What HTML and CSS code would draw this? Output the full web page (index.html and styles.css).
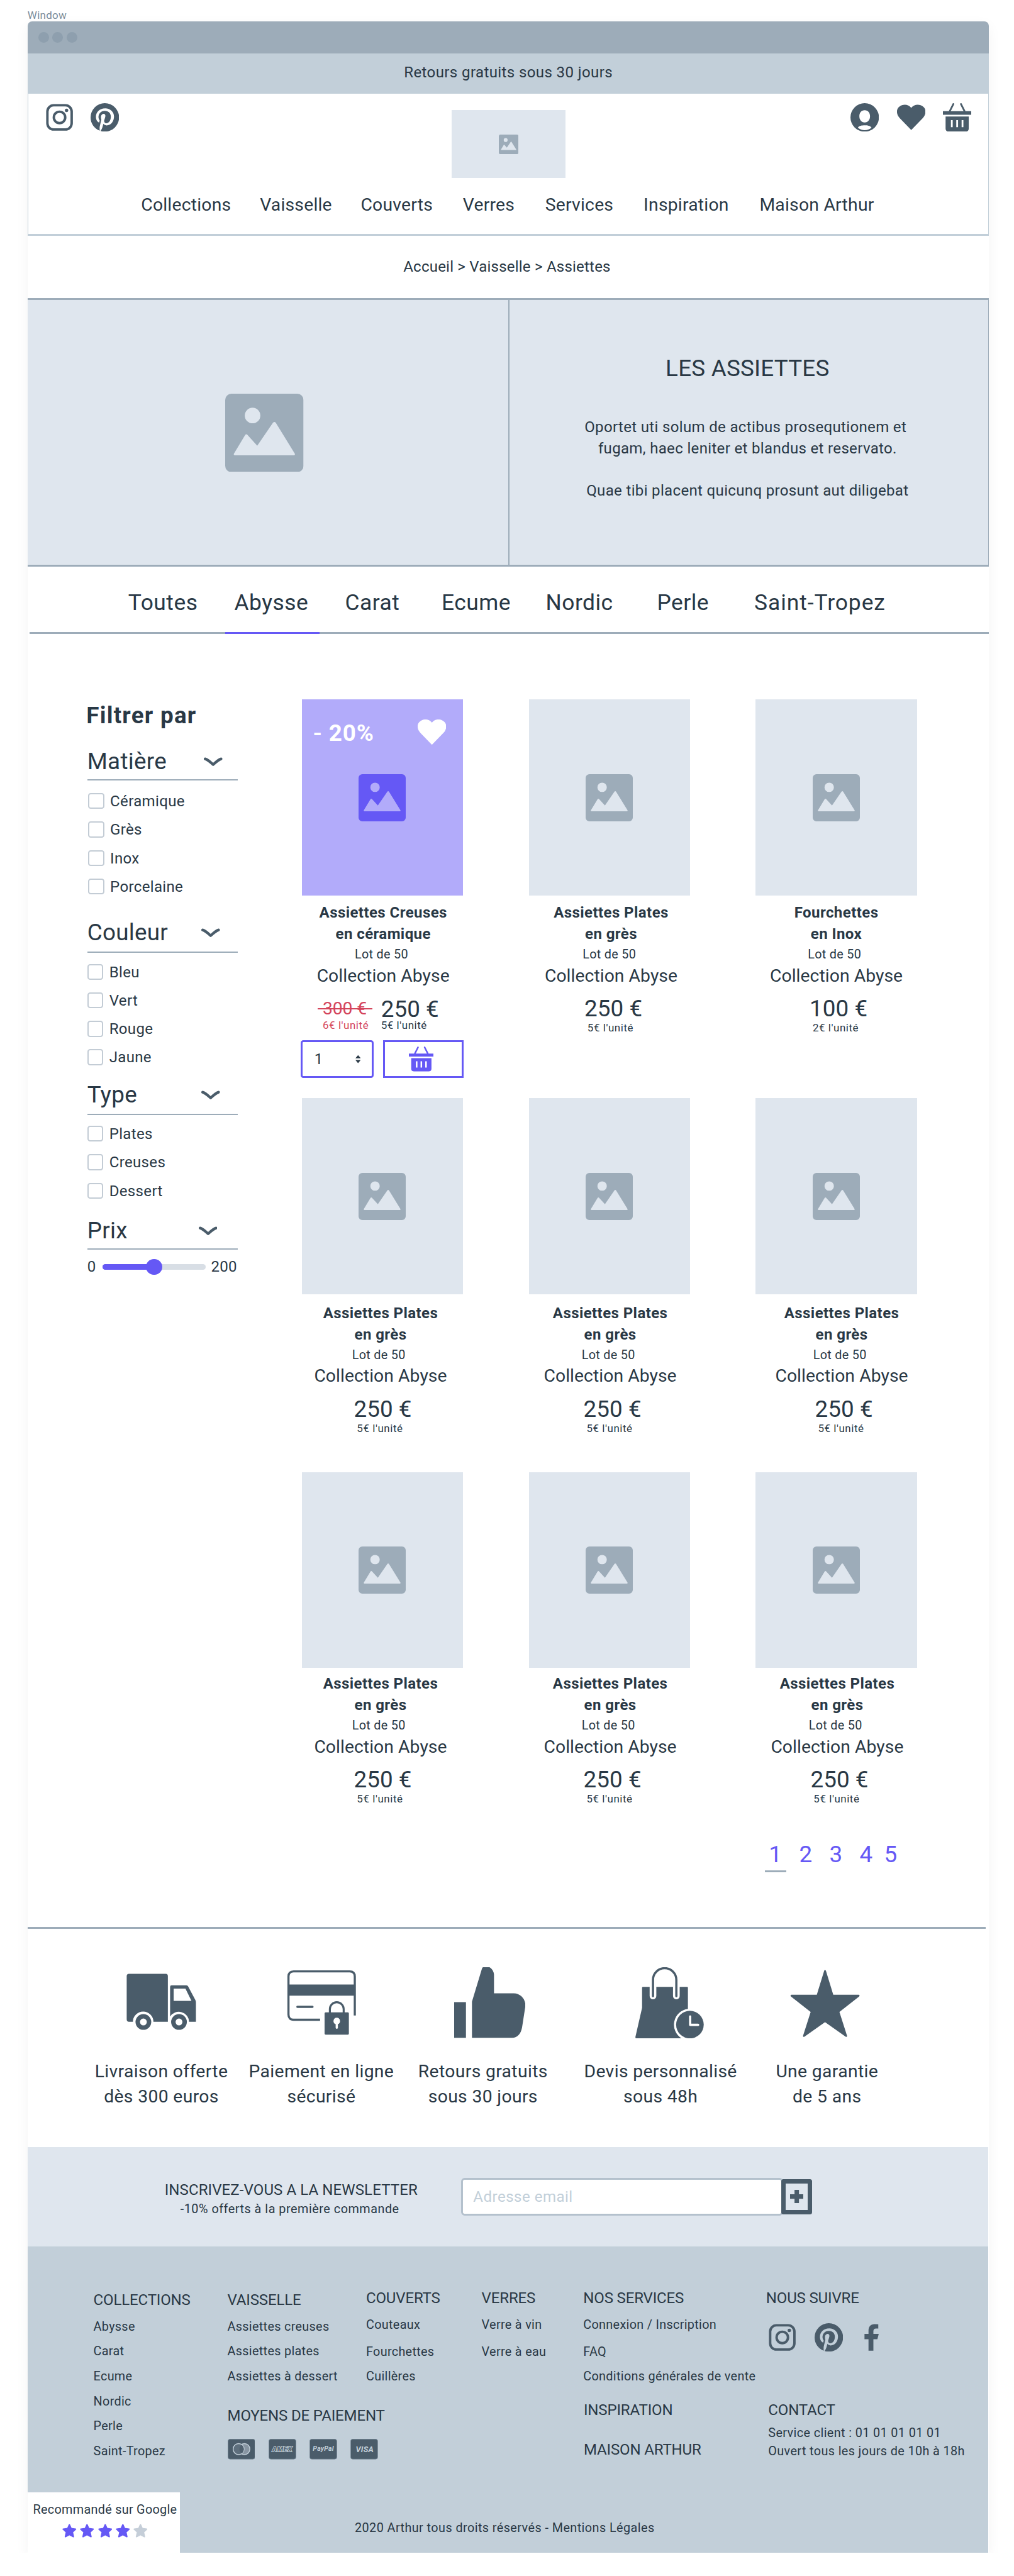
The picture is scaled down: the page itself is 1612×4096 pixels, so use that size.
FILE: index.html
```html
<!DOCTYPE html>
<html lang="fr">
<head>
<meta charset="utf-8">
<title>Les assiettes</title>
<link rel="stylesheet" href="styles.css">
</head>
<body>
<svg class="sprite" aria-hidden="true">
  <symbol id="instagram" viewBox="0 0 64 64"><rect x="4.75" y="4.75" width="54.5" height="54.5" rx="14" fill="none" stroke="currentColor" stroke-width="5.5"/><circle cx="32" cy="32" r="12.8" fill="none" stroke="currentColor" stroke-width="5.5"/><circle cx="47.8" cy="16.2" r="3.8" fill="currentColor"/></symbol>
  <symbol id="pinterest" viewBox="2 2 20 20"><path fill="currentColor" d="M9.04 21.54c.96.29 1.93.46 2.96.46a10 10 0 0 0 10-10A10 10 0 0 0 12 2 10 10 0 0 0 2 12c0 4.25 2.67 7.9 6.44 9.34-.09-.78-.18-2.07 0-2.96l1.15-4.94s-.29-.58-.29-1.5c0-1.38.86-2.41 1.84-2.41.86 0 1.26.63 1.26 1.44 0 .86-.57 2.09-.86 3.27-.17.98.52 1.84 1.52 1.84 1.78 0 3.16-1.9 3.16-4.58 0-2.4-1.72-4.04-4.19-4.04-2.82 0-4.48 2.1-4.48 4.31 0 .86.28 1.73.74 2.3.09.06.09.14.06.29l-.29 1.09c0 .17-.11.23-.28.11-1.28-.56-2.02-2.38-2.02-3.85 0-3.16 2.24-6.03 6.56-6.03 3.44 0 6.12 2.47 6.12 5.75 0 3.44-2.13 6.2-5.18 6.2-.97 0-1.92-.52-2.26-1.13l-.67 2.37c-.23.86-.86 2.01-1.29 2.7z"/></symbol>
  <symbol id="facebook" viewBox="0 0 64 64"><path fill="currentColor" d="M25 62V36H16V24H25V17C25 7 30 2 39 2Q44 2 47 2.500V12H42C38 12 36 14 36 18V24H48L45 36H36V62Z"/></symbol>
  <symbol id="user" viewBox="0 0 64 64"><path fill="currentColor" fill-rule="evenodd" d="M32 0A32 32 0 1 1 32 64A32 32 0 1 1 32 0ZM32 16C24.500 16 20 21.500 20 29.500S24.500 43.500 32 43.500 44 37.500 44 29.500 39.500 16 32 16ZM16.700 55C21 59 26.500 60.600 32 60.600S43 59 47.300 55C44 50.500 38 49.800 32 49.800S20 50.500 16.700 55Z"/></symbol>
  <symbol id="heart" viewBox="0 0 64 57"><path fill="currentColor" d="M32 57L6 30C-2 21.500-2 10 5 4.500C13-2 25-2 32 7C39-2 51-2 59 4.500C66 10 66 21.500 58 30Z"/></symbol>
  <symbol id="basket" viewBox="0 0 64 64"><path fill="none" stroke="currentColor" stroke-width="4" stroke-linecap="round" d="M15.500 18L23.500 2M48.500 18L40.500 2"/><path fill="currentColor" fill-rule="evenodd" d="M0 18H64V26H0ZM6 30H58V57Q58 64 51 64H13Q6 64 6 57ZM18 38V54H22V38ZM30 38V54H34V38ZM42 38V54H46V38Z"/></symbol>
  <symbol id="picture" viewBox="0 0 176 176"><path fill="currentColor" fill-rule="evenodd" d="M14 0H162A14 14 0 0 1 176 14V162A14 14 0 0 1 162 176H14A14 14 0 0 1 0 162V14A14 14 0 0 1 14 0ZM61.500 31.500A17.500 17.500 0 1 0 61.500 66.500A17.500 17.500 0 1 0 61.500 31.500ZM19.500 135L45 92.500Q47.500 90 50 92.500L72 117L107.500 65Q110.500 62 113.500 65L156.500 135Q157.500 138 154.500 138.500H21.500Q18.500 138 19.500 135Z"/></symbol>
  <symbol id="chevron" viewBox="0 0 42 60"><path fill="none" stroke="currentColor" stroke-width="6" stroke-linecap="round" stroke-linejoin="round" d="M3 23.500Q9 25 21 36.500Q33 25 39 23.500"/></symbol>
  <symbol id="rate" viewBox="0 0 32 31"><path fill="currentColor" stroke="currentColor" stroke-width="3" stroke-linejoin="round" d="M16 2L20 10.800L30 12L22.800 18.600L25 29L16 24L7 29L9.200 18.600L2 12L12 10.800Z"/></symbol>
</svg>

<div class="label">Window</div>
<div class="window">
  <div class="titlebar"><i></i><i></i><i></i></div>
  <div class="announce">Retours gratuits sous 30 jours</div>

  <header class="header">
    <div class="header-top">
      <div class="icons"><svg><use href="#instagram"/></svg><svg><use href="#pinterest"/></svg></div>
      <div class="logo"><svg><use href="#picture"/></svg></div>
      <div class="icons account"><svg><use href="#user"/></svg><svg><use href="#heart"/></svg><svg><use href="#basket"/></svg></div>
    </div>
    <nav class="nav"><a>Collections</a><a>Vaisselle</a><a>Couverts</a><a>Verres</a><a>Services</a><a>Inspiration</a><a>Maison Arthur</a></nav>
  </header>

  <div class="breadcrumb">Accueil &gt; Vaisselle &gt; Assiettes</div>

  <section class="hero">
    <div class="hero-picture"><svg><use href="#picture"/></svg></div>
    <div class="hero-text">
      <h1>LES ASSIETTES</h1>
      <p>Oportet uti solum de actibus prosequtionem et&nbsp;<br>fugam, haec leniter et blandus et reservato.</p>
      <p>Quae tibi placent quicunq prosunt aut diligebat</p>
    </div>
  </section>

  <nav class="tabs"><a>Toutes</a><a class="active">Abysse</a><a>Carat</a><a>Ecume</a><a>Nordic</a><a>Perle</a><a>Saint-Tropez</a></nav>

  <main class="main">
    <aside class="filters">
      <h2>Filtrer par</h2>
      <section class="filter material">
        <h3>Matière<svg><use href="#chevron"/></svg></h3>
        <label><i></i>Céramique</label><label><i></i>Grès</label><label><i></i>Inox</label><label><i></i>Porcelaine</label>
      </section>
      <section class="filter colour">
        <h3>Couleur<svg><use href="#chevron"/></svg></h3>
        <label><i></i>Bleu</label><label><i></i>Vert</label><label><i></i>Rouge</label><label><i></i>Jaune</label>
      </section>
      <section class="filter type">
        <h3>Type<svg><use href="#chevron"/></svg></h3>
        <label><i></i>Plates</label><label><i></i>Creuses</label><label><i></i>Dessert</label>
      </section>
      <section class="filter price-range">
        <h3>Prix<svg><use href="#chevron"/></svg></h3>
        <div class="range"><span class="min">0</span><div class="track"><div class="fill"></div><div class="thumb"></div></div><span>200</span></div>
      </section>
    </aside>

    <div class="catalogue">
      <div class="products">
        <article class="card row1 nudge-2">
          <div class="photo sale"><span class="discount">- 20%</span><svg class="fav"><use href="#heart"/></svg><svg><use href="#picture"/></svg></div>
          <div class="info">
            <h4>Assiettes Creuses<br>en céramique</h4>
            <p class="lot">Lot de 50</p>
            <p class="collection">Collection Abyse</p>
            <div class="prices">
              <div class="old"><p class="was">300 €</p><p class="unit">6€ l'unité</p></div>
              <div class="new"><p class="price">250 €</p><p class="unit">5€ l'unité</p></div>
            </div>
          </div>
          <div class="buy">
            <div class="quantity">1<svg viewBox="0 0 12 20"><path fill="currentColor" d="M0 8L6 1L12 8ZM0 12L6 19L12 12Z"/></svg></div>
            <div class="add"><svg><use href="#basket"/></svg></div>
          </div>
        </article>
        <article class="card row1 nudge-4">
          <div class="photo"><svg><use href="#picture"/></svg></div>
          <div class="info"><h4>Assiettes Plates<br>en grès</h4><p class="lot">Lot de 50</p><p class="collection">Collection Abyse</p><p class="price">250 €</p><p class="unit">5€ l'unité</p></div>
        </article>
        <article class="card row1">
          <div class="photo"><svg><use href="#picture"/></svg></div>
          <div class="info"><h4>Fourchettes<br>en Inox</h4><p class="lot">Lot de 50</p><p class="collection">Collection Abyse</p><p class="price">100 €</p><p class="unit">2€ l'unité</p></div>
        </article>
        <article class="card row2 nudge-left">
          <div class="photo"><svg><use href="#picture"/></svg></div>
          <div class="info"><h4>Assiettes Plates<br>en grès</h4><p class="lot">Lot de 50</p><p class="collection">Collection Abyse</p><p class="price">250 €</p><p class="unit">5€ l'unité</p></div>
        </article>
        <article class="card row2 nudge-2">
          <div class="photo"><svg><use href="#picture"/></svg></div>
          <div class="info"><h4>Assiettes Plates<br>en grès</h4><p class="lot">Lot de 50</p><p class="collection">Collection Abyse</p><p class="price">250 €</p><p class="unit">5€ l'unité</p></div>
        </article>
        <article class="card row2 nudge-12">
          <div class="photo"><svg><use href="#picture"/></svg></div>
          <div class="info"><h4>Assiettes Plates<br>en grès</h4><p class="lot">Lot de 50</p><p class="collection">Collection Abyse</p><p class="price">250 €</p><p class="unit">5€ l'unité</p></div>
        </article>
        <article class="card row3 nudge-left">
          <div class="photo"><svg><use href="#picture"/></svg></div>
          <div class="info"><h4>Assiettes Plates<br>en grès</h4><p class="lot">Lot de 50</p><p class="collection">Collection Abyse</p><p class="price">250 €</p><p class="unit">5€ l'unité</p></div>
        </article>
        <article class="card row3 nudge-2">
          <div class="photo"><svg><use href="#picture"/></svg></div>
          <div class="info"><h4>Assiettes Plates<br>en grès</h4><p class="lot">Lot de 50</p><p class="collection">Collection Abyse</p><p class="price">250 €</p><p class="unit">5€ l'unité</p></div>
        </article>
        <article class="card row3 nudge-2">
          <div class="photo"><svg><use href="#picture"/></svg></div>
          <div class="info"><h4>Assiettes Plates<br>en grès</h4><p class="lot">Lot de 50</p><p class="collection">Collection Abyse</p><p class="price">250 €</p><p class="unit">5€ l'unité</p></div>
        </article>
      </div>
      <nav class="pages"><a class="current">1</a><a>2</a><a>3</a><a>4</a><a class="last">5</a></nav>
    </div>
  </main>

  <section class="services">
    <div class="service">
      <svg viewBox="-2 -15 160 160"><path fill="currentColor" fill-rule="evenodd" d="M5 0H88Q92.500 0 92.500 5V107.500H60A23 23 0 0 0 14 107.500H5Q0 107.500 0 102V5Q0 0 5 0ZM101 25.500H134Q137 25.500 138 28L154 58Q155.500 61 155.500 64V107.500H140A23 23 0 0 0 97.500 96V29Q97.500 25.500 101 25.500ZM105.500 33V60.500H145.500L132 33Z"/><g fill="none" stroke="currentColor" stroke-width="10"><circle cx="37.500" cy="108" r="12.700"/><circle cx="117.500" cy="108" r="12.700"/></g></svg>
      <p>Livraison offerte<br>dès 300 euros</p>
    </div>
    <div class="service">
      <svg viewBox="-4 -7 160 160"><path fill="none" stroke="currentColor" stroke-width="4.800" d="M73.500 111H14Q2.500 111 2.500 99V14Q2.500 2.400 14 2.400H140Q151.500 2.400 151.500 14V101.500"/><path fill="currentColor" d="M2 32H152V57H2Z"/><path stroke="currentColor" stroke-width="4.800" stroke-linecap="round" d="M22.500 82H56.500"/><path fill="none" stroke="currentColor" stroke-width="4.500" d="M95.500 96V87A15.500 15.500 0 0 1 126.500 87V96"/><path fill="currentColor" fill-rule="evenodd" d="M86 94.500H136Q138.200 94.500 138.200 97V142Q138.200 144.500 136 144.500H86Q83.600 144.500 83.600 142V97Q83.600 94.500 86 94.500ZM111 106.500A7.500 7.500 0 0 0 108.500 121V129Q108.500 131.500 111 131.500T113.500 129V121A7.500 7.500 0 0 0 111 106.500Z"/></svg>
      <p>Paiement en ligne<br>sécurisé</p>
    </div>
    <div class="service">
      <svg class="thumb-up" viewBox="0 3 160 160"><path fill="currentColor" transform="translate(0 .5)" d="M0 81H26.500V161H0ZM40 161V80L62 7C63.500 2 67 0 72 0C81 1 89 9 89.500 19V61H134C149 61 161 74 160 90L152.500 138C150 151 143 161 130 161Z"/></svg>
      <p>Retours gratuits<br>sous 30 jours</p>
    </div>
    <div class="service">
      <svg class="bag" viewBox="-3 0 160 160"><path fill="currentColor" d="M17 44H116Q118 44 118 46V93.500A36 36 0 0 0 104 160H2Q0 160 0 157L15 91V46Q15 44 17 44Z"/><path fill="none" stroke="#fff" stroke-width="15" stroke-linecap="round" d="M39.500 44V64.500M92 44V64.500"/><path fill="none" stroke="currentColor" stroke-width="5" stroke-linecap="round" d="M39.500 65V28.500A26.250 26.250 0 0 1 92 28.500V65"/><circle cx="122.500" cy="129" r="31" fill="currentColor"/><path fill="none" stroke="#fff" stroke-width="5" stroke-linecap="round" stroke-linejoin="round" d="M123 110.500V129.500H141"/></svg>
      <p>Devis personnalisé<br>sous 48h</p>
    </div>
    <div class="service">
      <svg class="star" viewBox="-2 -6.500 160 160"><path fill="currentColor" stroke="currentColor" stroke-width="4" stroke-linejoin="round" d="M78 2L95 57.500H153.500L108 93.500L125.500 148L78 114.500L30.500 148L48 93.500L2.500 57.500H61Z"/></svg>
      <p>Une garantie<br>de 5 ans</p>
    </div>
  </section>

  <section class="newsletter">
    <div class="pitch"><h5>INSCRIVEZ-VOUS A LA NEWSLETTER</h5><p>-10% offerts à la première commande</p></div>
    <input type="text" placeholder="Adresse email">
    <div class="plus"><svg viewBox="0 0 30 30"><path stroke="currentColor" stroke-width="10" d="M0 15H30M15 0V30"/></svg></div>
  </section>

  <footer class="footer">
    <div class="sitemap">
      <div class="col low"><h6>COLLECTIONS</h6><a>Abysse</a><a>Carat</a><a>Ecume</a><a>Nordic</a><a>Perle</a><a>Saint-Tropez</a></div>
      <div class="col low"><h6>VAISSELLE</h6><a>Assiettes creuses</a><a>Assiettes plates</a><a>Assiettes à dessert</a>
        <h6 class="payment">MOYENS DE PAIEMENT</h6>
        <div class="cards">
          <svg viewBox="0 0 62 46"><rect class="plate" x=".5" y=".5" width="61" height="45" rx="5"/><circle cx="37.500" cy="23" r="12.300" fill="#8795a2" stroke="#c2cfd9" stroke-width="2"/><circle cx="24.500" cy="23" r="12.300" fill="#5e6f7d" stroke="#c2cfd9" stroke-width="2"/><path fill="#50616f" d="M31 13.400A11.300 11.300 0 0 1 31 32.600A12.300 12.300 0 0 1 31 13.400Z"/></svg>
          <svg viewBox="0 0 62 46"><rect class="plate" x=".5" y=".5" width="61" height="45" rx="5"/><text class="amex" x="30.500" y="28.500" textLength="44">AMEX</text></svg>
          <svg viewBox="0 0 62 46"><rect class="plate" x=".5" y=".5" width="61" height="45" rx="5"/><text class="paypal" x="31" y="27" textLength="47">PayPal</text></svg>
          <svg viewBox="0 0 62 46"><rect class="plate" x=".5" y=".5" width="61" height="45" rx="5"/><text class="visa" x="32" y="29.500" textLength="40">VISA</text></svg>
        </div>
      </div>
      <div class="col"><h6>COUVERTS</h6><a>Couteaux</a><a>Fourchettes</a><a>Cuillères</a></div>
      <div class="col"><h6>VERRES</h6><a>Verre à vin</a><a>Verre à eau</a></div>
      <div class="col"><h6>NOS SERVICES</h6><a>Connexion / Inscription</a><a>FAQ</a><a>Conditions générales de vente</a>
        <h6 class="inspiration">INSPIRATION</h6><h6 class="maison">MAISON ARTHUR</h6></div>
      <div class="col"><h6>NOUS SUIVRE</h6>
        <div class="social"><svg><use href="#instagram"/></svg><svg><use href="#pinterest"/></svg><svg><use href="#facebook"/></svg></div>
        <div class="contact"><h6>CONTACT</h6><p>Service client : 01 01 01 01 01<br>Ouvert tous les jours de 10h à 18h</p></div>
      </div>
    </div>
    <div class="bottom">
      <div class="badge"><p>Recommandé sur Google</p>
        <div class="stars"><svg><use href="#rate"/></svg><svg><use href="#rate"/></svg><svg><use href="#rate"/></svg><svg><use href="#rate"/></svg><svg class="off"><use href="#rate"/></svg></div></div>
      <p class="copyright">2020 Arthur tous droits réservés - Mentions Légales</p>
    </div>
  </footer>
</div>
</body>
</html>
```
FILE: styles.css
```css
/* 1rem is a tenth of the 2278-unit wide design grid */
html { font-size: 7.0764px; }
* { box-sizing: border-box; margin: 0; padding: 0; }
body { background: #fff; color: #293845; font-family: Roboto, "Liberation Sans", sans-serif; font-size: 3.4rem; overflow-x: hidden; }
svg { display: block; flex: none; }
h1, h2, h3, h4, h5, h6 { font-weight: 400; }
.sprite { position: absolute; width: 0; height: 0; }

.label { padding: 2.22rem 0 .18rem 6.2rem; font-size: 2.4rem; line-height: 2.4rem; letter-spacing: .016em; color: #7a8c9b; }
.window { width: 216rem; margin-left: 6.2rem; border-radius: 1rem 1rem 0 0; background: #fff; box-shadow: 0 1rem 3rem rgba(0, 0, 0, .05); }
.titlebar { height: 7.2rem; display: flex; align-items: center; gap: .8rem; padding-left: 2.4rem; background: #9dacb9; border-radius: 1rem 1rem 0 0; }
.titlebar i { width: 2.4rem; height: 2.4rem; border-radius: 50%; background: #8e9fae; }
.announce { height: 9rem; line-height: 8.76rem; background: #c2cfd9; text-align: center; letter-spacing: .016em; }

.header { height: 32rem; border: solid #c2cfd9; border-width: 0 1px 3px; }
.header-top { display: grid; grid-template-columns: 1fr auto 1fr; height: 19rem; padding: 2.2rem 3.8rem 0; color: #4a5c6a; }
.icons { display: flex; gap: 3.8rem; }
.icons svg { width: 6.4rem; height: 6.4rem; }
.account { justify-content: flex-end; gap: 4rem; }
.logo { width: 25.6rem; height: 15.2rem; margin-top: 1.6rem; display: flex; align-items: center; justify-content: center; background: #dfe6ee; color: #9dacb9; }
.logo svg { width: 4.4rem; height: 4.4rem; }
.nav { display: grid; grid-template-columns: 26.7rem 22.65rem 22.95rem 18.5rem 22.1rem 26.05rem auto; margin-top: 3.23rem; padding-left: 25.35rem; font-size: 4rem; line-height: 5.6rem; letter-spacing: .008em; }

.breadcrumb { height: 14rem; line-height: 14rem; padding-right: .6rem; text-align: center; letter-spacing: .0083em; }

.hero { display: grid; grid-template-columns: 108.2rem 1fr; height: 60.4rem; border: solid #9dacb9; border-width: 3px 1px 3px 0; background: #dfe6ee; }
.hero-picture { display: flex; align-items: center; justify-content: center; padding-right: 1.5rem; border-right: 2px solid #9dacb9; color: #9dacb9; }
.hero-picture svg { width: 17.6rem; height: 17.6rem; }
.hero-text { padding: 12.4rem .6rem 0 0; text-align: center; line-height: 4.8rem; letter-spacing: .0135em; }
.hero-text h1 { margin-bottom: 7.82rem; font-size: 5.2rem; line-height: 6rem; letter-spacing: .006em; }
.hero-text p + p { margin-top: 4.8rem; }

.tabs { display: grid; grid-template-columns: 23.85rem 24.85rem 21.7rem 23.4rem 25rem 21.85rem auto; height: 15rem; margin-left: .4rem; padding-left: 22.2rem; border-bottom: 3px solid #9dacb9; font-size: 5rem; line-height: 6rem; letter-spacing: .014em; }
.tabs a { height: 15rem; padding-top: 5.07rem; }
.tabs a:last-child { letter-spacing: .0266em; }
.tabs .active { width: 21.2rem; margin-left: -2.05rem; padding-left: 2.05rem; border-bottom: 3px solid #6558f5; }

.main { display: flex; height: 290.6rem; padding-left: 13.4rem; }
.filters { width: 33.8rem; padding-top: 15.45rem; letter-spacing: .0135em; }
.filters h2 { margin-left: -.2rem; font-size: 5.2rem; line-height: 6rem; font-weight: 700; letter-spacing: .034em; }
.filter { display: flex; flex-direction: column; gap: 2.8rem; }
.filter h3 { display: flex; justify-content: space-between; padding-right: 4rem; border-bottom: 2px solid #9dacb9; font-size: 5.2rem; line-height: 6rem; letter-spacing: .008em; }
.filter h3 svg { width: 4.2rem; height: 6rem; color: #4a5c6a; }
.filter label { display: flex; gap: 1.35rem; line-height: 3.8rem; height: 3.6rem; }
.filter label i { width: 3.6rem; height: 3.6rem; border: 2px solid #c3ccd5; border-radius: .6rem; }
.material { margin-top: 4.34rem; }
.material h3 { height: 7.21rem; padding-right: 3.4rem; }
.material label { padding-left: .2rem; }
.colour { margin-top: 5.65rem; }
.colour h3 { height: 7.51rem; margin-bottom: -.36rem; }
.type { margin-top: 3.72rem; }
.type h3 { height: 7.45rem; margin-bottom: -.4rem; }
.price-range { margin-top: 4.2rem; gap: 2.16rem; }
.price-range h3 { height: 7.18rem; padding-right: 4.6rem; }
.range { display: flex; align-items: center; line-height: 3.6rem; }
.range .min { width: 3.4rem; }
.track { position: relative; width: 23.2rem; height: 1.2rem; margin-right: 1.2rem; border-radius: .6rem; background: #d8dee5; }
.fill { width: 50%; height: 100%; border-radius: .6rem; background: #6558f5; }
.thumb { position: absolute; left: 9.8rem; top: -1.2rem; width: 3.6rem; height: 3.6rem; border-radius: 50%; background: #6558f5; }

.catalogue { margin-left: 14.4rem; padding-top: 14.8rem; }
.products { display: grid; grid-template-columns: repeat(3, 36.2rem); grid-template-rows: 89.6rem 84.04rem 75rem; column-gap: 14.8rem; }
.photo { position: relative; height: 44rem; display: flex; align-items: center; justify-content: center; background: #dfe6ee; color: #9dacb9; }
.photo svg { width: 10.6rem; height: 10.6rem; }
.sale { background: #b2abfa; color: #6558f5; }
.sale .discount { position: absolute; left: 2.5rem; top: 4.67rem; color: #fff; font-size: 5.2rem; line-height: 6rem; font-weight: 700; letter-spacing: .024em; }
.sale .fav { position: absolute; left: 26rem; top: 4.5rem; width: 6.4rem; height: 5.7rem; color: #fff; }
.info { text-align: center; }
.row1 .info { padding-top: 1.64rem; }
.row2 .info { padding-top: 2.04rem; }
.row3 .info { padding-top: 1.24rem; }
.nudge-2 .info { margin: 0 -.2rem 0 .2rem; }
.nudge-4 .info { margin: 0 -.4rem 0 .4rem; }
.nudge-12 .info { margin: 0 -1.2rem 0 1.2rem; }
.nudge-left .info { margin: 0 .4rem 0 -.4rem; }
.info h4 { font-size: 3.4rem; line-height: 4.8rem; font-weight: 700; letter-spacing: .017em; }
.lot { margin-top: .2rem; padding-right: .8rem; font-size: 2.8rem; line-height: 3.6rem; letter-spacing: .0157em; }
.collection { margin-top: .64rem; font-size: 4rem; line-height: 4.8rem; letter-spacing: .002em; }
.price { margin-top: 2.09rem; padding-left: 1rem; font-size: 5.2rem; line-height: 6rem; letter-spacing: .002em; }
.unit { margin-top: -.19rem; padding-right: .3rem; font-size: 2.4rem; line-height: 3rem; letter-spacing: .032em; }
.prices { display: flex; gap: 2rem; margin-left: 3.4rem; text-align: left; }
.prices .unit { margin-top: -.88rem; padding: 0; }
.prices .price { margin-top: 2.14rem; padding: 0; }
.old { position: relative; width: 12.2rem; padding-left: 1.1rem; color: #d4455c; }
.old::after { content: ""; position: absolute; left: 0; right: 0; top: 4.9rem; height: 2px; background: #d4455c; }
.was { margin-top: 2.05rem; font-size: 4rem; line-height: 6rem; letter-spacing: -.005em; }
.prices .old .unit { margin-top: -.79rem; }
.buy { display: flex; gap: 2rem; margin: 1.86rem -.2rem 0; }
.quantity { display: flex; align-items: center; justify-content: space-between; width: 16.4rem; height: 8.4rem; padding: 0 2.6rem; border: 3px solid #6558f5; border-radius: .6rem; }
.quantity svg { width: 1.2rem; height: 2rem; }
.add { display: flex; align-items: center; justify-content: center; width: 18.2rem; height: 8.4rem; padding-right: 1rem; border: 3px solid #6558f5; color: #6558f5; }
.add svg { width: 5.6rem; height: 5.6rem; }

.pages { display: flex; margin: 8rem 0 0 104rem; color: #6558f5; font-size: 5.2rem; line-height: 6rem; text-align: center; }
.pages a { width: 4.8rem; height: 6.8rem; margin-left: 2rem; }
.pages .current { margin-left: 0; border-bottom: 3px solid #9dacb9; }
.pages .last { margin-left: .7rem; }

.services { display: grid; grid-template-columns: 36rem 35.9rem 36.7rem 43.1rem 31.7rem; height: 49.4rem; width: 215.2rem; padding: 8.6rem 0 0 12.05rem; border-top: 3px solid #9dacb9; }
.service { display: flex; flex-direction: column; align-items: center; text-align: center; font-size: 4rem; line-height: 5.57rem; letter-spacing: .0125em; }
.service svg { width: 16rem; height: 16rem; margin-bottom: 4.67rem; color: #4a5c6a; }
.service .thumb-up { margin-left: 3rem; }
.service .bag { margin-left: 4.2rem; }
.service .star { margin-right: .8rem; }

.newsletter { display: flex; align-items: flex-start; width: 215.8rem; height: 22.4rem; padding: 7rem 0 0 30.7rem; background: #dfe6ee; }
.pitch { width: 57rem; margin-top: .64rem; text-align: center; }
.pitch h5 { font-size: 3.4rem; line-height: 4rem; letter-spacing: .0034em; white-space: nowrap; }
.pitch p { margin-top: .57rem; padding-right: .6rem; font-size: 2.8rem; line-height: 3.6rem; letter-spacing: .026em; }
.newsletter input { width: 72.4rem; height: 8.4rem; margin-left: 9.7rem; padding-left: 2.3rem; border: 3px solid #b4c1cd; border-radius: .8rem; background: #fff; font: inherit; letter-spacing: .02em; }
.newsletter input::placeholder { color: #c2cfd9; opacity: 1; }
.plus { z-index: 1; display: flex; align-items: center; justify-content: center; width: 7rem; height: 8rem; margin: .2rem 0 0 -.5rem; border: 1rem solid #4a5c6a; border-radius: .5rem; background: #dfe6ee; color: #4a5c6a; }
.plus svg { width: 3rem; height: 3rem; }

.footer { width: 215.8rem; height: 68.8rem; background: #c2cfd9; }
.sitemap { display: grid; grid-template-columns: 30.1rem 31.15rem 25.95rem 22.85rem 41.05rem auto; height: 55.2rem; padding: 9.64rem 0 0 14.8rem; }
.col { display: flex; flex-direction: column; font-size: 2.8rem; line-height: 5.6rem; letter-spacing: .016em; white-space: nowrap; }
.col h6 { margin-bottom: 1.2rem; font-size: 3.4rem; line-height: 4rem; letter-spacing: -.007em; }
.col a + a { margin-top: .4rem; }
.col a + a + a, .low a + a { margin-top: 0; }
.low { padding-top: .38rem; }
.col .payment { margin: 3.98rem 0 3.26rem; }
.cards { display: flex; gap: 3rem; }
.cards svg { width: 6.2rem; height: 4.6rem; }
.plate { fill: #4a5c6a; stroke: #8090a0; stroke-width: 1; }
.cards text { fill: #c2cfd9; font-weight: 700; font-style: italic; text-anchor: middle; letter-spacing: 0; }
.cards .amex { fill: #4a5c6a; stroke: #c2cfd9; stroke-width: 2.6px; paint-order: stroke; font-size: 15px; }
.cards .paypal { font-size: 15px; }
.cards .visa { font-size: 18px; }
.col .inspiration { margin: 2.78rem 0 4.78rem .1rem; }
.col .maison { margin-left: .1rem; }
.social { display: flex; gap: 4rem; margin: 2.34rem 0 11.24rem .5rem; color: #4a5c6a; }
.social svg { width: 6.4rem; height: 6.4rem; }
.social svg:last-child { margin-left: -.8rem; }
.contact { padding-left: .5rem; line-height: 4rem; letter-spacing: .0195em; }
.bottom { display: flex; height: 13.6rem; font-size: 2.8rem; line-height: 3.6rem; }
.badge { width: 34.2rem; padding: 2.21rem 0 0 .6rem; background: #fff; text-align: center; letter-spacing: .015em; white-space: nowrap; }
.stars { display: flex; justify-content: center; gap: .8rem; margin-top: 1.29rem; color: #6558f5; }
.stars svg { width: 3.2rem; height: 3.1rem; }
.stars .off { color: #c5ced8; }
.copyright { margin: 6.2rem 0 0 39.3rem; letter-spacing: .0219em; }
```
